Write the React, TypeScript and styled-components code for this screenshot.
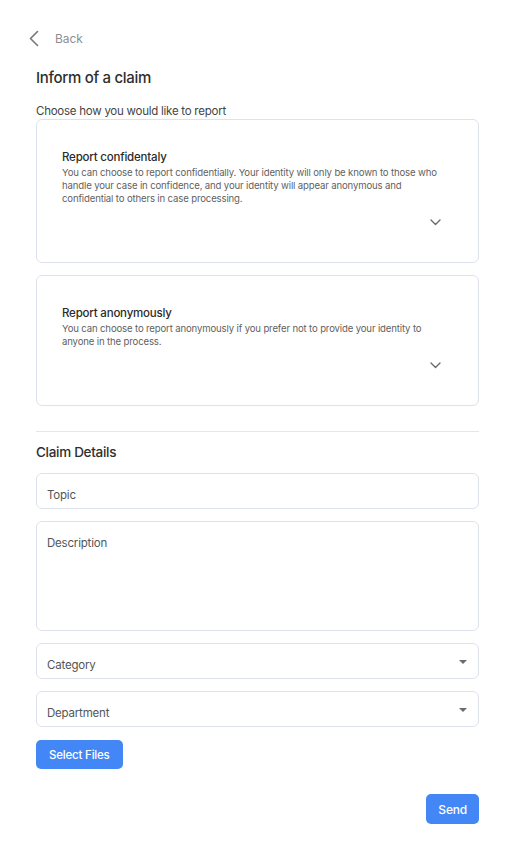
import React from "react";
import styled, { createGlobalStyle } from "styled-components";

const Global = createGlobalStyle`
  html, body { margin: 0; padding: 0; background: #fff; }
  body { font-family: Inter, "Noto Sans", sans-serif; color: #333; }
  * { box-sizing: border-box; }
`;

const Page = styled.div`
  width: 517px;
  padding: 28px 38px 20px 36px;
  display: flex;
  flex-direction: column;
`;

const BackRow = styled.div`
  display: flex;
  align-items: center;
  gap: 15px;
  margin-left: -8px;
  height: 20px;
`;

const BackText = styled.span`
  font-size: 12px;
  color: #8f8f8f;
  letter-spacing: -0.1px;
`;

const Title = styled.h1`
  margin: 20px 0 0;
  font-size: 15px;
  font-weight: 500;
  color: #2e2e2e;
  line-height: 20px;
  letter-spacing: -0.3px;
`;

const Subtitle = styled.p`
  margin: 16px 0 0;
  font-size: 11.5px;
  color: #444;
  line-height: 14px;
  letter-spacing: -0.25px;
`;

const Cards = styled.div`
  display: flex;
  flex-direction: column;
  gap: 12px;
  margin-top: 1px;
`;

const Card = styled.div`
  border: 1px solid #dde2ec;
  border-radius: 6px;
  padding: 29px 26px 32px 25px;
  display: flex;
  flex-direction: column;
`;

const CardTitle = styled.div`
  font-size: 11.5px;
  font-weight: 500;
  color: #2b2b2b;
  line-height: 16px;
  letter-spacing: -0.2px;
`;

const CardDesc = styled.div`
  font-size: 9.6px;
  color: #5f5f5f;
  line-height: 13px;
  letter-spacing: -0.15px;
  margin-top: 1px;
`;

const ChevronRow = styled.div`
  display: flex;
  justify-content: flex-end;
  padding-right: 11px;
  margin-top: 9px;
  height: 16px;
  align-items: center;
`;

const Divider = styled.hr`
  border: none;
  border-top: 1px solid #e3e6ec;
  margin: 25px 0 0;
  width: 100%;
`;

const SectionTitle = styled.h2`
  margin: 11px 0 0;
  font-size: 13.5px;
  font-weight: 500;
  color: #2e2e2e;
  line-height: 18px;
  letter-spacing: -0.3px;
`;

const Fields = styled.div`
  display: flex;
  flex-direction: column;
  gap: 12px;
  margin-top: 12px;
`;

const Field = styled.div<{ $h: number }>`
  position: relative;
  height: ${(p) => p.$h}px;
  border: 1px solid #dde2ec;
  border-radius: 6px;
  padding: 14px 11px 0 10px;
  font-size: 11.5px;
  color: #555;
  line-height: 14px;
  letter-spacing: -0.2px;
`;

const Caret = styled.span`
  position: absolute;
  right: 11px;
  top: 16px;
  width: 0;
  height: 0;
  border-left: 4.5px solid transparent;
  border-right: 4.5px solid transparent;
  border-top: 4.5px solid #6b6b6b;
`;

const Button = styled.button`
  background: #4287f5;
  color: #fff;
  border: none;
  border-radius: 5px;
  font-family: inherit;
  font-size: 11.5px;
  font-weight: 500;
  letter-spacing: -0.2px;
  height: 29px;
  padding: 0 13px;
`;

const FilesRow = styled.div`
  margin-top: 13px;
  display: flex;
`;

const SendRow = styled.div`
  margin-top: 25px;
  display: flex;
  justify-content: flex-end;
`;

const SendButton = styled(Button)`
  height: 30px;
  padding: 0 12px;
  font-size: 12px;
`;

const BackChevron = () => (
  <svg width="12" height="17" viewBox="0 0 12 17" fill="none">
    <path d="M9.5 1.5 L2.5 8.5 L9.5 15.5" stroke="#777" strokeWidth="1.6" strokeLinecap="round" strokeLinejoin="round" />
  </svg>
);

const DownChevron = () => (
  <svg width="11" height="7" viewBox="0 0 11 7" fill="none">
    <path d="M1 1 L5.5 5.5 L10 1" stroke="#6a6a6a" strokeWidth="1.4" strokeLinecap="round" strokeLinejoin="round" />
  </svg>
);

const options = [
  {
    title: "Report confidentaly",
    desc: "You can choose to report confidentially. Your identity will only be known to those who handle your case in confidence, and your identity will appear anonymous and confidential to others in case processing.",
  },
  {
    title: "Report anonymously",
    desc: "You can choose to report anonymously if you prefer not to provide your identity to anyone in the process.",
  },
];

export default function App() {
  return (
    <Page>
      <Global />
      <BackRow>
        <BackChevron />
        <BackText>Back</BackText>
      </BackRow>
      <Title>Inform of a claim</Title>
      <Subtitle>Choose how you would like to report</Subtitle>
      <Cards>
        {options.map((o) => (
          <Card key={o.title}>
            <CardTitle>{o.title}</CardTitle>
            <CardDesc>{o.desc}</CardDesc>
            <ChevronRow>
              <DownChevron />
            </ChevronRow>
          </Card>
        ))}
      </Cards>
      <Divider />
      <SectionTitle>Claim Details</SectionTitle>
      <Fields>
        <Field $h={36}>Topic</Field>
        <Field $h={110}>Description</Field>
        <Field $h={36}>
          Category
          <Caret />
        </Field>
        <Field $h={36}>
          Department
          <Caret />
        </Field>
      </Fields>
      <FilesRow>
        <Button>Select Files</Button>
      </FilesRow>
      <SendRow>
        <SendButton>Send</SendButton>
      </SendRow>
    </Page>
  );
}
